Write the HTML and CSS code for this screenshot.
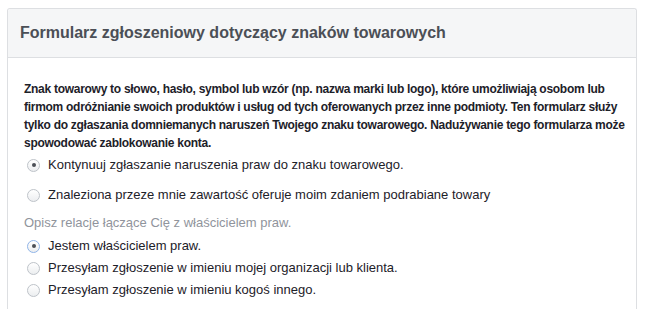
FILE: index.html
```html
<!DOCTYPE html>
<html lang="pl">
<head>
<meta charset="utf-8">
<title>Formularz zgłoszeniowy dotyczący znaków towarowych</title>
<link rel="stylesheet" href="styles.css">
</head>
<body>
<div class="card">
  <div class="card-header">
    <h1 class="title">Formularz zgłoszeniowy dotyczący znaków towarowych</h1>
  </div>
  <div class="card-body">
    <p class="intro">Znak towarowy to słowo, hasło, symbol lub wzór (np. nazwa marki lub logo), które umożliwiają osobom lub firmom odróżnianie swoich produktów i usług od tych oferowanych przez inne podmioty. Ten formularz służy tylko do zgłaszania domniemanych naruszeń Twojego znaku towarowego. Nadużywanie tego formularza może spowodować zablokowanie konta.</p>
    <div class="group group-wide">
      <label class="option"><span class="radio checked"></span><span class="label">Kontynuuj zgłaszanie naruszenia praw do znaku towarowego.</span></label>
      <label class="option"><span class="radio"></span><span class="label">Znaleziona przeze mnie zawartość oferuje moim zdaniem podrabiane towary</span></label>
    </div>
    <div class="question">Opisz relacje łączące Cię z właścicielem praw.</div>
    <div class="group group-tight">
      <label class="option"><span class="radio checked focused"></span><span class="label">Jestem właścicielem praw.</span></label>
      <label class="option"><span class="radio"></span><span class="label">Przesyłam zgłoszenie w imieniu mojej organizacji lub klienta.</span></label>
      <label class="option"><span class="radio"></span><span class="label">Przesyłam zgłoszenie w imieniu kogoś innego.</span></label>
    </div>
  </div>
</div>
</body>
</html>
```
FILE: styles.css
```css
html, body {
  margin: 0;
  padding: 0;
  background: #ffffff;
}
body {
  font-family: "Liberation Sans", Arial, Helvetica, sans-serif;
  color: #1d2129;
  padding: 8px 0 0 7px;
  height: 309px;
  box-sizing: border-box;
  overflow: hidden;
}
.card {
  width: 630px;
  border: 1px solid #dddfe2;
  border-bottom: none;
  border-radius: 3px 3px 0 0;
  background: #ffffff;
  height: 301px;
  box-sizing: border-box;
}
.card-header {
  background: #f5f6f7;
  border-bottom: 1px solid #dddfe2;
  border-radius: 3px 3px 0 0;
  height: 48px;
  display: flex;
  align-items: center;
  padding-left: 12px;
}
.title {
  margin: 0;
  font-size: 16px;
  font-weight: bold;
  color: #4b4f56;
  line-height: 20px;
}
.card-body {
  padding: 22px 8px 0 16px;
}
.intro {
  margin: 0;
  font-size: 12px;
  font-weight: bold;
  letter-spacing: -0.28px;
  line-height: 18px;
  color: #1d2129;
}
.group {
  display: flex;
  flex-direction: column;
  padding-left: 3px;
}
.group-wide {
  margin-top: 4px;
  gap: 12px;
}
.group-tight {
  gap: 4px;
}
.option {
  display: flex;
  align-items: center;
  height: 18px;
  gap: 8px;
}
.radio {
  width: 11px;
  height: 11px;
  border: 1px solid #bec3c9;
  border-radius: 50%;
  background: linear-gradient(#ffffff, #eceef0);
  display: flex;
  align-items: center;
  justify-content: center;
  flex: none;
}
.radio.checked::after {
  content: "";
  width: 4px;
  height: 4px;
  border-radius: 50%;
  background: #4b4f56;
}
.radio.focused {
  border-color: #8fb4e8;
}
.label {
  font-size: 13px;
  color: #1d2129;
  line-height: 18px;
}
.question {
  font-size: 13px;
  color: #90949c;
  line-height: 18px;
  margin-top: 10px;
  margin-bottom: 5px;
}
```
